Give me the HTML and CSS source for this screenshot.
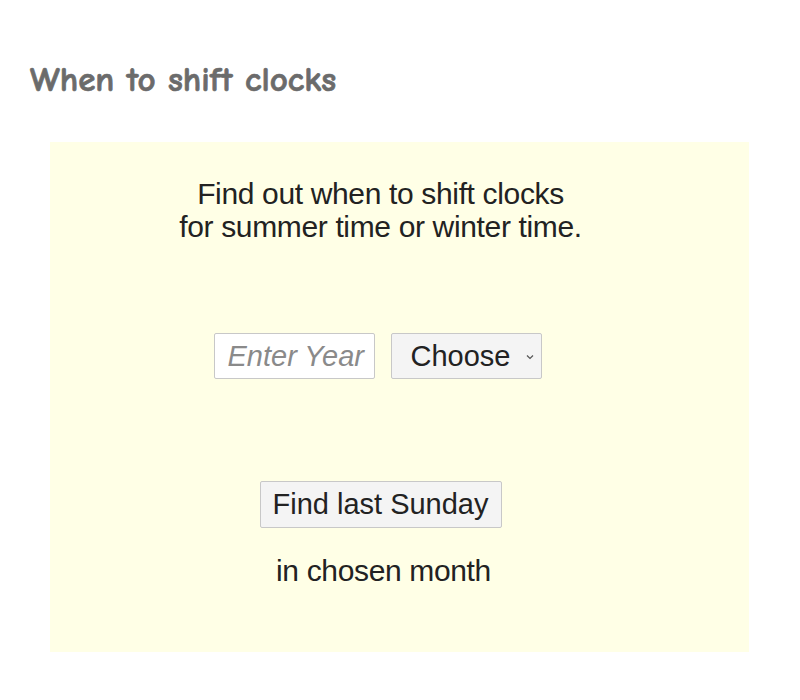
FILE: index.html
```html
<!DOCTYPE html>
<html>
<head>
<meta charset="utf-8">
<link rel="stylesheet" href="styles.css">
</head>
<body>
<h1 class="title">When to shift clocks</h1>
<div class="panel">
  <p class="intro">Find out when to shift clocks<br>for summer time or winter time.</p>
  <div class="controls">
    <input class="year" type="text" placeholder="Enter Year">
    <div class="select">Choose
      <svg class="caret" width="8" height="6" viewBox="0 0 8 6"><path d="M1 1.5 L4 4.5 L7 1.5" fill="none" stroke="#555" stroke-width="1.2"/></svg>
    </div>
  </div>
  <button class="find">Find last Sunday</button>
  <p class="note">in chosen month</p>
</div>
</body>
</html>
```

FILE: styles.css
```css
body {
  margin: 0;
  background: #fff;
  font-family: "Liberation Sans", Arial, sans-serif;
}
.title {
  margin: 0;
  padding: 60px 0 0 30px;
  height: 80px;
  box-sizing: border-box;
  font-family: "Comic Sans MS", "Comic Neue", "DejaVu Sans", cursive;
  font-weight: bold;
  font-size: 35px;
  line-height: 40px;
  color: #6b6b6b;
  -webkit-text-stroke: 0.7px #6b6b6b;
}
.panel {
  margin: 62px 0 0 50px;
  width: 699px;
  height: 510px;
  box-sizing: border-box;
  background: #ffffe6;
  padding: 35px 38px 0 0;
  display: flex;
  flex-direction: column;
  align-items: center;
  color: #222;
}
.intro {
  margin: 0;
  font-size: 30px;
  line-height: 33px;
  letter-spacing: -0.35px;
  text-align: center;
}
.controls {
  margin: 90px 6px 0 0;
  display: flex;
  gap: 16px;
}
.year {
  width: 161px;
  height: 46px;
  box-sizing: border-box;
  border: 1px solid #c8c8c8;
  border-radius: 2px;
  background: #fff;
  padding: 0 6px 0 13px;
  font-family: "Liberation Sans", Arial, sans-serif;
  font-size: 29px;
  outline: none;
}
.year::placeholder {
  color: #8a8a8a;
  font-style: italic;
}
.select {
  width: 151px;
  height: 46px;
  box-sizing: border-box;
  border: 1px solid #c8c8c8;
  border-radius: 2px;
  background: #f4f4f4;
  font-size: 29px;
  display: flex;
  align-items: center;
  padding-left: 19px;
  color: #222;
  position: relative;
}
.caret {
  position: absolute;
  right: 7px;
  top: 20px;
}
.find {
  margin-top: 102px;
  width: 242px;
  height: 47px;
  box-sizing: border-box;
  border: 1px solid #c8c8c8;
  border-radius: 2px;
  background: #f4f4f4;
  font-family: "Liberation Sans", Arial, sans-serif;
  font-size: 29px;
  color: #222;
  padding: 0;
}
.note {
  margin: 26px 0 0 6px;
  font-size: 30px;
  line-height: 33px;
  letter-spacing: -0.35px;
}
```
